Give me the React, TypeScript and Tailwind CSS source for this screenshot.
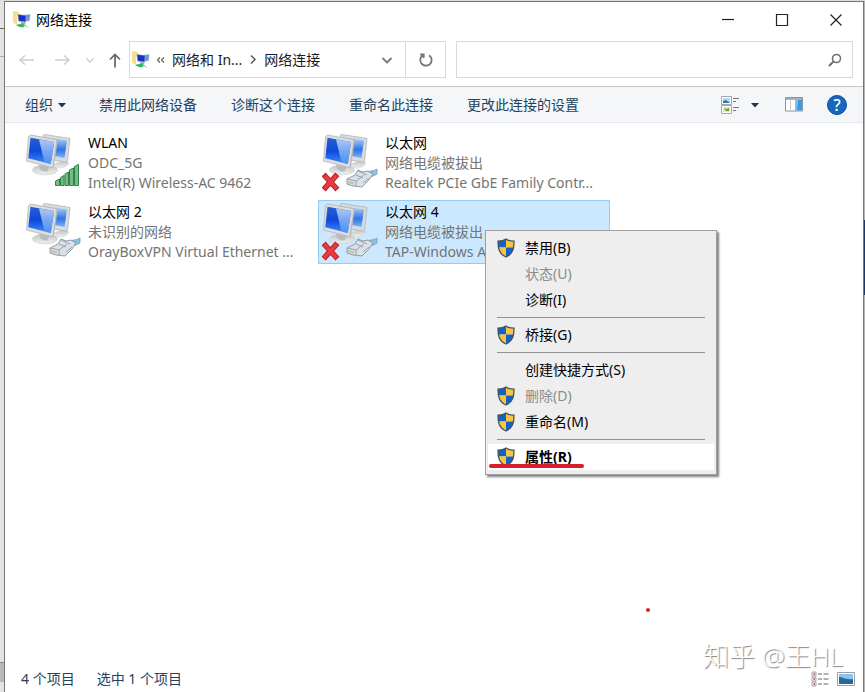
import React, { useState } from 'react';

type Badge = 'signal' | 'cable' | 'unplugged';

interface Connection {
  name: string;
  status: string;
  device: string;
  badge: Badge;
}

interface MenuEntry {
  label: string;
  shield?: boolean;
  disabled?: boolean;
  primary?: boolean;
}

const connections: Connection[] = [
  { name: 'WLAN', status: 'ODC_5G', device: 'Intel(R) Wireless-AC 9462', badge: 'signal' },
  { name: '以太网', status: '网络电缆被拔出', device: 'Realtek PCIe GbE Family Contr...', badge: 'unplugged' },
  { name: '以太网 2', status: '未识别的网络', device: 'OrayBoxVPN Virtual Ethernet ...', badge: 'cable' },
  { name: '以太网 4', status: '网络电缆被拔出', device: 'TAP-Windows A', badge: 'unplugged' },
];

// Groups are split by separators
const menuGroups: MenuEntry[][] = [
  [
    { label: '禁用(B)', shield: true },
    { label: '状态(U)', disabled: true },
    { label: '诊断(I)' },
  ],
  [{ label: '桥接(G)', shield: true }],
  [
    { label: '创建快捷方式(S)' },
    { label: '删除(D)', shield: true, disabled: true },
    { label: '重命名(M)', shield: true },
  ],
  [{ label: '属性(R)', shield: true, primary: true }],
];

const commands = ['禁用此网络设备', '诊断这个连接', '重命名此连接', '更改此连接的设置'];

const NetworkIcon = () => (
  <svg viewBox="0 0 18 18" className="h-[18px] w-[18px] shrink-0" aria-hidden="true">
    <path d="M0 .5l4 1v12l-4-2z" fill="#efc95c" />
    <path d="M0 .5L2 0l4 1.200v4L4 5v8l-4-1.500z" fill="#f8df8a" />
    <path d="M11 4.500l6-1-.5 6-5.500 1z" fill="#6f93dc" stroke="#8ba0c8" strokeWidth=".6" />
    <path d="M5 3.500l8 1-.5 6.500-7-1z" fill="#1b2fc0" stroke="#8fa3cf" strokeWidth=".5" />
    <path d="M8 11l5 .5-1 1.500H8z" fill="#9aa4b5" />
    <path d="M3 14c3-1.200 6-1 9-.5l-1 2.500c-2 .8-5 .2-8-2z" fill="#35b566" />
    <path d="M12 14l2.500 2.500" stroke="#7fb896" strokeWidth="1" />
  </svg>
);

const ShieldIcon = () => (
  <svg viewBox="0 0 18 20" className="h-5 w-[18px]" aria-hidden="true">
    <clipPath id="shieldClip">
      <path d="M9 1c2 1.500 4.500 2.200 8 2.200 0 7-.8 12.300-8 15.800C1.800 15.500 1 10.200 1 3.200 4.500 3.200 7 2.500 9 1z" />
    </clipPath>
    <g clipPath="url(#shieldClip)">
      <path d="M0 0h9v9.500H0z" fill="#1263c4" />
      <path d="M9 0h9v9.500H9z" fill="#fcc33c" />
      <path d="M0 9.500h9V20H0z" fill="#fcc33c" />
      <path d="M9 9.500h9V20H9z" fill="#1263c4" />
    </g>
    <path d="M9 1c2 1.500 4.500 2.200 8 2.200 0 7-.8 12.300-8 15.800C1.800 15.500 1 10.200 1 3.200 4.500 3.200 7 2.500 9 1z" fill="none" stroke="#3d5568" strokeWidth="1.300" />
  </svg>
);

const ConnectionIcon = ({ badge }: { badge: Badge }) => (
  <svg viewBox="0 0 63 60" className="h-[60px] w-[63px] shrink-0" aria-hidden="true">
    <defs>
      <linearGradient id="screen" x1="0" y1="0" x2="0" y2="1">
        <stop offset="0" stopColor="#2a5fd0" />
        <stop offset=".5" stopColor="#0d49dc" />
        <stop offset="1" stopColor="#3f8cf8" />
      </linearGradient>
      <linearGradient id="glare" x1="0" y1="0" x2="0" y2="1">
        <stop offset="0" stopColor="#cfe4fa" />
        <stop offset="1" stopColor="#4f93f2" />
      </linearGradient>
      <linearGradient id="backScreen" x1="0" y1="0" x2="0" y2="1">
        <stop offset="0" stopColor="#bcdaf8" />
        <stop offset=".6" stopColor="#2f74e6" />
        <stop offset="1" stopColor="#7ab4f8" />
      </linearGradient>
      <linearGradient id="stand" x1="0" y1="0" x2="0" y2="1">
        <stop offset="0" stopColor="#c2c4c5" />
        <stop offset="1" stopColor="#f0f0ee" />
      </linearGradient>
    </defs>
    <path d="M29 31c4-2 9-4 14-2 2 2-2 5-7 6-4 0-7-1-7-4z" fill="url(#stand)" stroke="#cacac8" strokeWidth=".5" />
    <path d="M18 2.500L20 1.500l25 4L42.500 28l-2 1-12-2z" fill="#d9dbdd" stroke="#b0b3b6" strokeWidth=".8" />
    <path d="M20 4l22 3.600L39.500 25l-10-2z" fill="url(#backScreen)" />
    <ellipse cx="20" cy="37" rx="12.500" ry="4.800" fill="url(#stand)" stroke="#c6c7c6" strokeWidth=".6" />
    <path d="M14 32l10 2-1 4c-3 1-6 0-8-2z" fill="#b9bbbd" />
    <path d="M30.500 6.500l2.500-.8-4 27-2 1.800z" fill="#b9bcbf" />
    <path d="M3.500 3.500L5.500 2l26.500 4.800L28 34l-1.500.5L1.500 28z" fill="#dcdedf" stroke="#b0b3b5" strokeWidth=".8" />
    <path d="M5.500 4.800l23.700 4.300-3.400 22L3.300 25.300z" fill="url(#screen)" />
    <path d="M14 6.400l15.200 2.700-3.400 22-6.300-1.500z" fill="url(#glare)" opacity=".8" />
    {badge === 'signal' && (
      <g fill="#74bd83" stroke="#2f8150" strokeWidth="1">
        <path d="M30.500 48l4-2v6.500h-4z" />
        <path d="M35.500 44.500l3.500-2v10h-3.500z" />
        <path d="M40 41l3.500-2v13.500H40z" />
        <path d="M44.500 37l4-2v17.500h-4z" />
        <path d="M49.500 33.500l4-2v21h-4z" />
      </g>
    )}
    {badge !== 'signal' && (
      <g strokeLinejoin="round">
        <path d="M44 40c3-3 7-1 11-4v5c-3 2-6 3-9 3z" fill="#8fc3dc" stroke="#6ba3bd" strokeWidth=".8" />
        <path d="M25 46l8-4 3-5 5 2 5-1 5 3-4 6-7 7-9-1-6-2z" fill="#dbe1e7" stroke="#8492a0" strokeWidth=".9" />
        <path d="M25 46l9 2 8-6M34 48v5M34 42l7 3M36 38l9 4M41 50l6-5" fill="none" stroke="#8e9dab" strokeWidth=".9" />
        <path d="M27 48v2.500M29 48.500V51M31 49v2.500" stroke="#b9a06a" strokeWidth=".9" />
      </g>
    )}
    {badge === 'unplugged' && (
      <g>
        <path d="M3.500 43.500l10 11M13.500 43.500l-10 11" stroke="#b81f24" strokeWidth="5.500" strokeLinecap="square" />
        <path d="M3.500 43.500l10 11M13.500 43.500l-10 11" stroke="#e93a40" strokeWidth="3.500" strokeLinecap="square" />
      </g>
    )}
  </svg>
);

const ContextMenu = () => (
  <div
    role="menu"
    className="absolute left-[166px] top-[29px] z-10 w-[232px] border border-[#a0a0a0] bg-[#eeeeee] px-0.5 py-1 text-black shadow-[2px_2px_2px_rgba(0,0,0,0.5)]"
  >
    {menuGroups.map((group, i) => (
      <React.Fragment key={i}>
        {i > 0 && (
          <div role="separator" className="flex h-[9px] items-center px-[9px]">
            <div className="h-px w-full bg-[#929292]" />
          </div>
        )}
        {group.map((entry) => (
          <button
            key={entry.label}
            role="menuitem"
            disabled={entry.disabled}
            className={`relative flex h-[26px] w-full items-center pl-[9px] text-left hover:bg-white disabled:text-[#8c8c8c] ${entry.primary ? 'bg-white font-bold' : ''}`}
          >
            <span className="w-7 shrink-0">{entry.shield && <ShieldIcon />}</span>
            {entry.label}
            {entry.primary && <span className="absolute left-px top-5 h-1 w-[95px] rounded-full bg-[#d8202a]" />}
          </button>
        ))}
      </React.Fragment>
    ))}
  </div>
);

const TitleBar = () => (
  <header className="flex h-[35px] items-center pl-2">
    <NetworkIcon />
    <h1 className="ml-[5px] flex-1 text-black">网络连接</h1>
    <button aria-label="最小化" className="flex h-full w-[54px] items-center justify-center">
      <svg width="14" height="14" aria-hidden="true"><path d="M1 6.500h12" stroke="#222" strokeWidth="1.200" /></svg>
    </button>
    <button aria-label="最大化" className="flex h-full w-[54px] items-center justify-center">
      <svg width="14" height="14" aria-hidden="true"><path d="M1.500 1.500h11v11h-11z" fill="none" stroke="#222" strokeWidth="1.200" /></svg>
    </button>
    <button aria-label="关闭" className="flex h-full w-[54px] items-center justify-center">
      <svg width="14" height="14" aria-hidden="true"><path d="M1.500 1.500l11 11M12.500 1.500l-11 11" stroke="#222" strokeWidth="1.200" /></svg>
    </button>
  </header>
);

const NavigationBar = () => {
  const [query, setQuery] = useState('');

  return (
    <div className="flex items-center border-b border-[#c6c6c6] pb-2 pl-3 pr-2.5 pt-1">
      <button aria-label="后退" disabled className="w-5">
        <svg width="18" height="16" fill="none" stroke="#cfcfcf" strokeWidth="1.500" aria-hidden="true"><path d="M3 8h14M8 3.500L3 8l5 4.500" /></svg>
      </button>
      <button aria-label="前进" disabled className="ml-4 w-5">
        <svg width="18" height="16" fill="none" stroke="#cfcfcf" strokeWidth="1.500" aria-hidden="true"><path d="M2 8h14M11 3.500L16 8l-5 4.500" /></svg>
      </button>
      <button aria-label="最近的位置" disabled className="ml-3 w-3">
        <svg width="10" height="16" fill="none" stroke="#cfcfcf" strokeWidth="1.500" aria-hidden="true"><path d="M1.500 6.500L5 10l3.500-3.500" /></svg>
      </button>
      <button aria-label="上移" className="ml-[11px] w-4">
        <svg width="14" height="16" fill="none" stroke="#666" strokeWidth="1.700" aria-hidden="true"><path d="M7 15.500V2.500M2 7.500l5-5 5 5" /></svg>
      </button>

      <nav aria-label="地址" className="ml-[5px] flex h-[37px] w-[317px] shrink-0 items-center border border-[#d9d9d9] pl-0.5 text-[#1c1c1c]">
        <NetworkIcon />
        <button aria-label="展开" className="ml-1.5 w-4">
          <svg width="9" height="16" fill="none" stroke="#555" strokeWidth="1.100" aria-hidden="true"><path d="M4 5.500L1.500 8 4 10.500M8 5.500L5.500 8 8 10.500" /></svg>
        </button>
        <button className="whitespace-nowrap">网络和 In...</button>
        <svg width="8" height="16" className="mx-[7px] shrink-0" fill="none" stroke="#555" strokeWidth="1.500" aria-hidden="true"><path d="M2 3.500L6 7.500l-4 4" /></svg>
        <button className="whitespace-nowrap">网络连接</button>
        <button aria-label="以前的位置" className="ml-auto flex h-full w-[37px] items-center justify-center">
          <svg width="12" height="12" fill="none" stroke="#777" strokeWidth="1.800" aria-hidden="true"><path d="M1.500 4L6 8.500 10.500 4" /></svg>
        </button>
        <button aria-label="刷新" className="flex h-full w-10 items-center justify-center border-l border-[#d9d9d9]">
          <svg width="16" height="16" fill="none" stroke="#777" strokeWidth="1.800" aria-hidden="true"><path d="M11 3.200A5.700 5.700 0 1 1 4.500 3.500M2.200 2.500h3.500v3.600" /></svg>
        </button>
      </nav>

      <label className="ml-[10px] flex h-[37px] min-w-0 flex-1 items-center border border-[#d9d9d9] pr-2.5">
        <input
          type="search"
          aria-label="搜索网络连接"
          value={query}
          onChange={(e) => setQuery(e.target.value)}
          className="min-w-0 flex-1 px-2 outline-none"
        />
        <svg width="14" height="14" fill="none" stroke="#707070" aria-hidden="true">
          <circle cx="8.500" cy="5.500" r="4" strokeWidth="1.600" />
          <path d="M5.700 8.300L1 13" strokeWidth="2" />
        </svg>
      </label>
    </div>
  );
};

const CommandBar = () => (
  <div className="flex h-9 items-center border-b border-[#e6eaee] bg-[#f4f6f8] pl-5 pr-4 text-[#24425f]">
    <button className="flex items-center gap-1 whitespace-nowrap">
      组织
      <svg width="10" height="6" aria-hidden="true"><path d="M1 1h8L5 5.500z" fill="#1c3550" /></svg>
    </button>
    <div className="ml-8 flex flex-1 gap-[34px]">
      {commands.map((command) => (
        <button key={command} className="whitespace-nowrap">{command}</button>
      ))}
    </div>
    <button aria-label="更改视图">
      <svg width="18" height="18" aria-hidden="true">
        <path d="M.5.5h10v8H.5zM.5 9.500h10v8H.5z" fill="#fff" stroke="#a3a8ad" />
        <path d="M2 2h7v5H2z" fill="#b5d9f5" />
        <path d="M2 5l3-1 4 3H2z" fill="#2f74b8" />
        <path d="M2 11h7v5H2z" fill="#dfe9c7" />
        <path d="M3 12l3 1 2-1v3H5z" fill="#6f9c31" />
        <path d="M12 2.500h6M12 5.500h3M12 11.500h6M12 14.500h3" stroke="#777" />
      </svg>
    </button>
    <button aria-label="更多视图选项" className="ml-2 w-4">
      <svg width="10" height="6" className="mx-auto" aria-hidden="true"><path d="M1 1h8L5 5.500z" fill="#1c3550" /></svg>
    </button>
    <button aria-label="预览窗格" className="ml-[22px]">
      <svg width="18" height="15" aria-hidden="true">
        <path d="M.5.5h17v13.500H.5z" fill="#fff" stroke="#8e959c" />
        <path d="M1 1h16v2H1z" fill="#a8afb6" />
        <path d="M5.500 3v10" stroke="#ccc" />
        <path d="M10 3h7v10.500h-7z" fill="#3c9be0" />
        <path d="M10 3h3l-1 10.500h-2z" fill="#7fc0ee" />
      </svg>
    </button>
    <button aria-label="帮助" className="ml-6 flex h-5 w-5 items-center justify-center rounded-full border border-[#0c4f95] bg-[#1568bd] text-base font-medium text-white">
      ?
    </button>
  </div>
);

const ConnectionItem = ({ item, selected, onSelect }: { item: Connection; selected: boolean; onSelect: () => void }) => (
  <li className={`relative border ${selected ? 'border-[#99cbee] bg-[#cce8ff]' : 'border-transparent'}`}>
    <button onClick={onSelect} aria-pressed={selected} className="flex w-full py-px pl-[3px] text-left leading-5">
      <ConnectionIcon badge={item.badge} />
      <span className="min-w-0 flex-1 text-[#747474]">
        <span className="block truncate text-black">{item.name}</span>
        <span className="block truncate">{item.status}</span>
        <span className="block truncate">{item.device}</span>
      </span>
    </button>
    {selected && <ContextMenu />}
  </li>
);

const StatusBar = () => (
  <footer className="flex h-[26px] items-center pl-4 pr-2 text-[#24425f]">
    <span>4 个项目</span>
    <span className="ml-[22px] flex-1">选中 1 个项目</span>
    <button aria-label="详细信息">
      <svg width="18" height="16" aria-hidden="true">
        <path d="M1 1h4v4H1zM1 6h4v4H1zM1 11h4v4H1z" fill="#fff" stroke="#9a8c90" strokeWidth=".8" />
        <path d="M2.500 3h1.500M2.500 8h1.500M2.500 13h1.500" stroke="#a03030" strokeWidth="1.500" />
        <path d="M7 3h4M12.500 3h5M7 8h4M12.500 8h5M7 13h4M12.500 13h5" stroke="#666" />
      </svg>
    </button>
    <button aria-label="大图标" className="ml-2">
      <svg width="18" height="14" aria-hidden="true">
        <path d="M.5.5h17v13H.5z" fill="#fff" stroke="#9aa0a6" />
        <path d="M2 2h14v10H2z" fill="#8cc4ef" />
        <path d="M2 5c4 0 6 3 14 2v5H2z" fill="#2d6f86" />
        <path d="M2 9c5-1 9 0 14 0v3H2z" fill="#2267ad" />
      </svg>
    </button>
  </footer>
);

export default function App() {
  const [selected, setSelected] = useState(3);

  return (
    <div className="flex min-h-screen bg-[#dcdcdc] pt-px text-sm font-['Noto_Sans','Noto_Sans_CJK_SC',sans-serif]">
      {/* windows peeking out behind the left edge */}
      <div className="flex w-1 shrink-0 flex-col bg-[#e4e4e4]">
        <div className="h-7 border-b border-[#666]" />
        <div className="h-7 border-b border-[#b0b0b0]" />
        <div className="flex-1" />
        <div className="h-5 border-t border-[#888] bg-[#b8b8b8]" />
        <div className="h-2.5" />
      </div>

      <div className="relative flex min-w-0 flex-1 flex-col border-x border-t border-[#777] bg-white">
        <TitleBar />
        <NavigationBar />
        <CommandBar />
        <main className="flex-1 pl-4 pt-2">
          <ul className="grid grid-cols-[repeat(auto-fill,292px)] gap-[5px]">
            {connections.map((item, i) => (
              <ConnectionItem key={item.name} item={item} selected={selected === i} onSelect={() => setSelected(i)} />
            ))}
          </ul>
        </main>
        <StatusBar />
        <span className="absolute bottom-20 right-[213px] h-1 w-1 rounded-full bg-[#d8202a]" />
        <span className="pointer-events-none absolute bottom-5 right-5 whitespace-nowrap text-[26px] font-light leading-8 text-white [text-shadow:1px_1px_1px_#808080]">
          知乎 @王HL
        </span>
      </div>

      <div className="flex w-px shrink-0 flex-col bg-[#b4b4b4]">
        <div className="h-[219px]" />
        <div className="h-[75px] bg-[#1d3766]" />
      </div>
    </div>
  );
}
